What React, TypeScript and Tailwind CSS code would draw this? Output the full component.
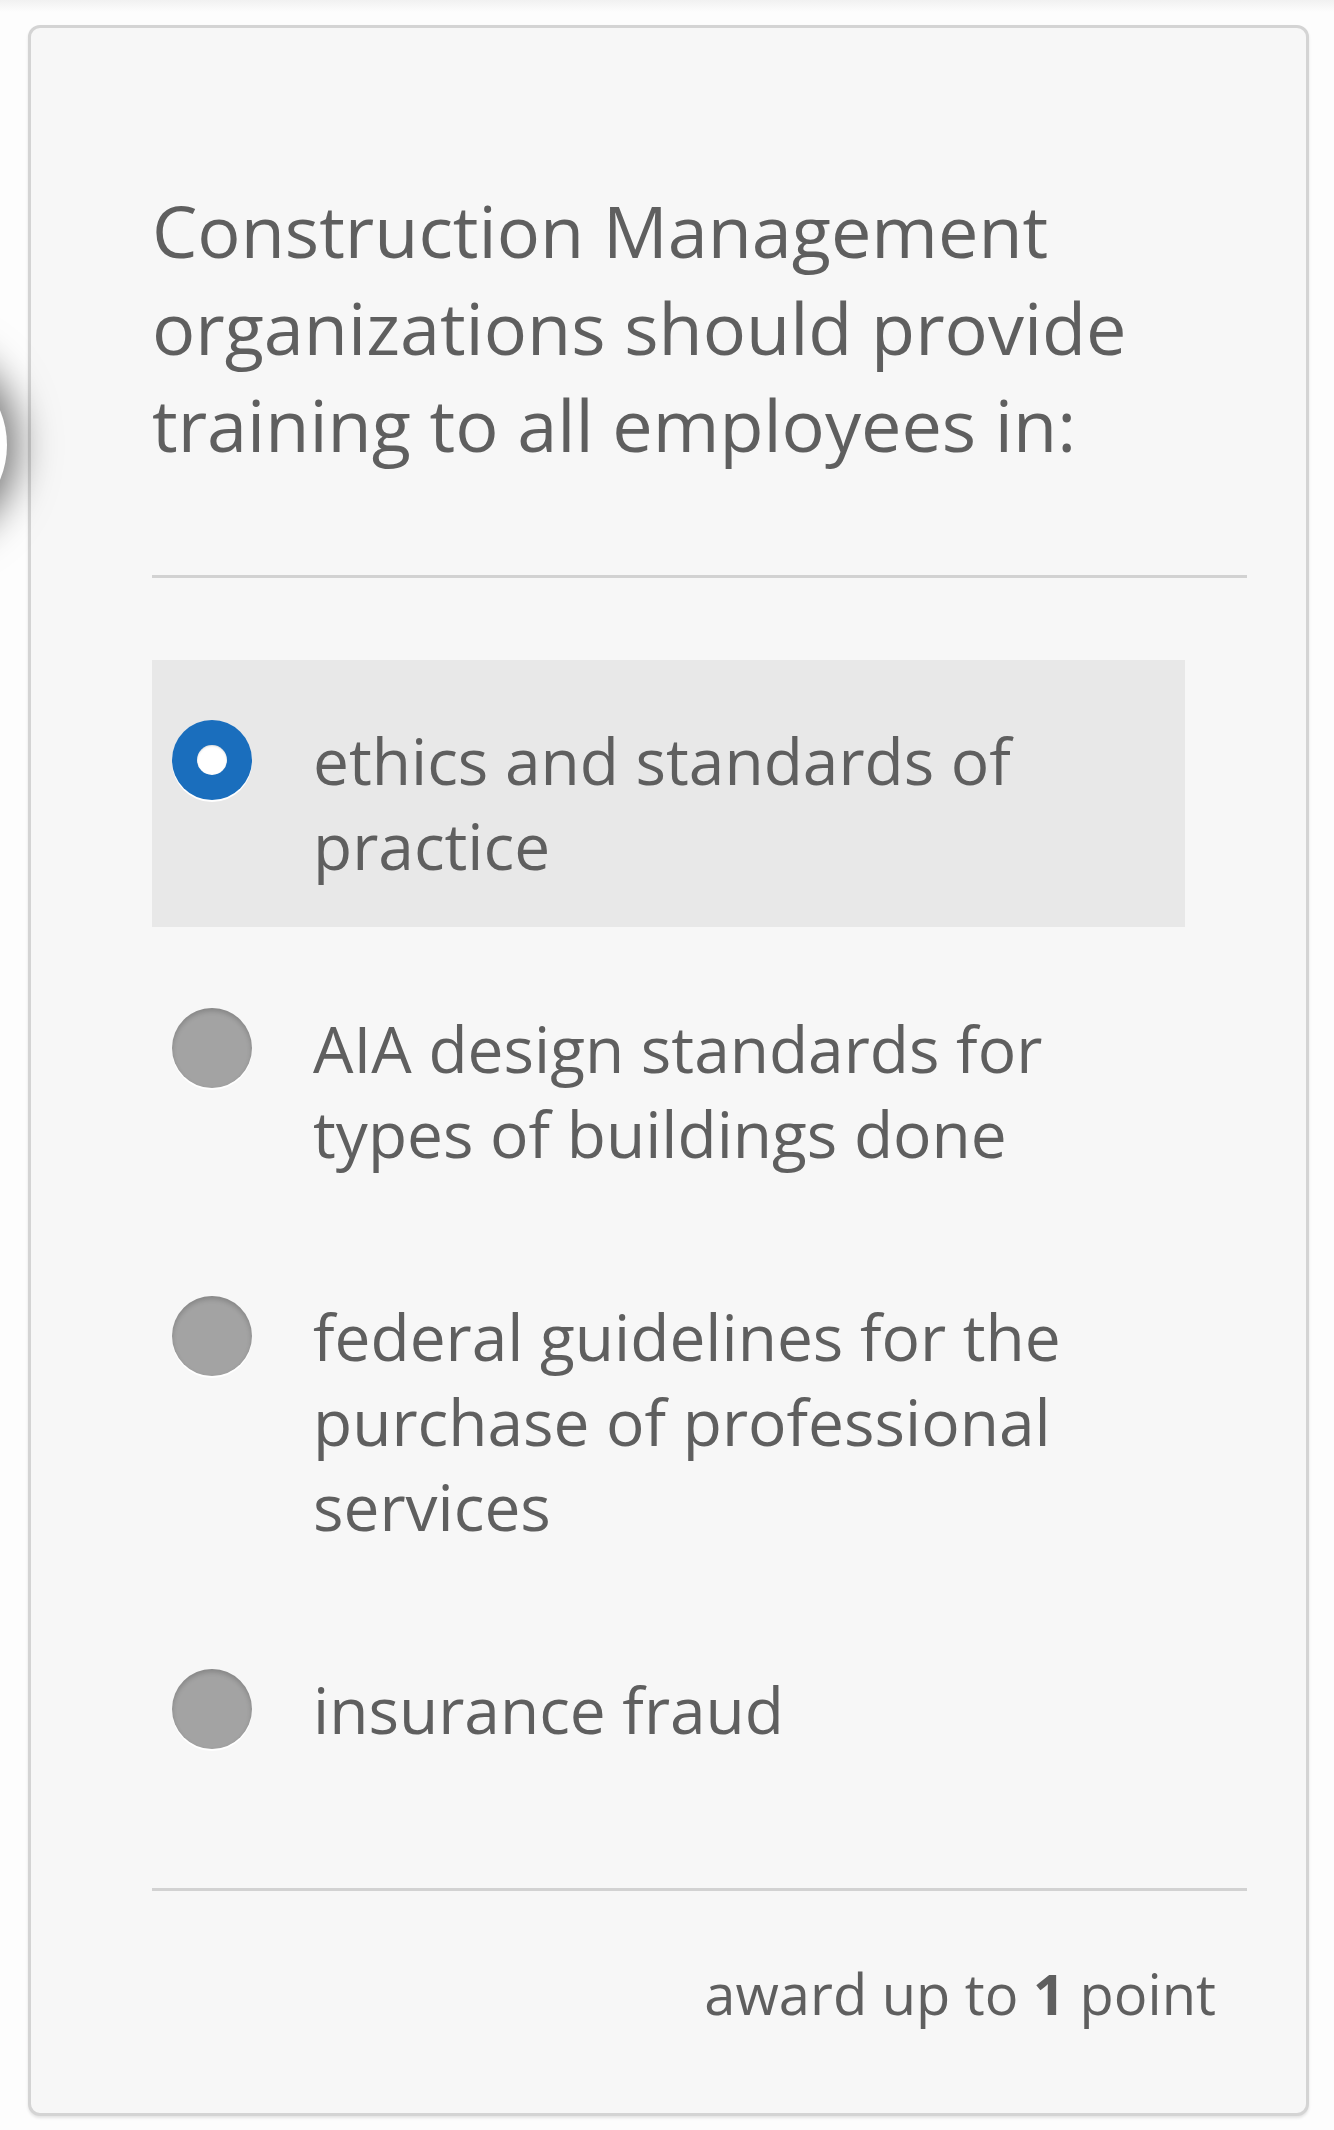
import React from "react"

const options = [
  { text: "ethics and standards of practice", selected: true },
  { text: "AIA design standards for types of buildings done", selected: false },
  { text: "federal guidelines for the purchase of professional services", selected: false },
  { text: "insurance fraud", selected: false },
]

function Radio({ checked }: { checked: boolean }) {
  if (checked) {
    return (
      <div className="mt-[2px] flex h-[80px] w-[80px] shrink-0 items-center justify-center rounded-full bg-[#1a6ebd] shadow-[0_2px_0_#ffffff]">
        <div className="h-[30px] w-[30px] rounded-full bg-white shadow-[inset_0_1px_2px_rgba(0,0,0,0.15)]" />
      </div>
    )
  }
  return (
    <div className="mt-[2px] h-[80px] w-[80px] shrink-0 rounded-full bg-[#a3a3a3] shadow-[inset_0_3px_5px_rgba(0,0,0,0.18),0_2px_0_#ffffff]" />
  )
}

export default function App() {
  return (
    <div
      className="relative min-h-[2130px] overflow-hidden bg-[#fdfdfd] text-[#5f5f5f]"
      style={{ fontFamily: '"Open Sans", "Noto Sans", sans-serif' }}
    >
      <div className="h-[12px] bg-gradient-to-b from-[#f1f1f1] to-[#fdfdfd]" />

      <div className="ml-[28px] mt-[13px] w-[1281px] rounded-[12px] border-[3px] border-[#d4d4d4] bg-[#f7f7f7] pb-[82px] pl-[121px] pr-[59px] pt-[154px] shadow-[0_2px_3px_rgba(0,0,0,0.1)]">
        <h1 className="text-[72px] font-normal leading-[97px]">
          Construction Management organizations should provide training to all employees in:
        </h1>

        <div className="mt-[102px] h-[3px] bg-[#d2d2d2]" />

        <div className="mt-[82px] flex w-[1033px] flex-col gap-[21px]">
          {options.map((o) => (
            <div
              key={o.text}
              className={`flex items-start gap-[61px] pb-[39px] pl-[20px] pr-[30px] pt-[58px] ${o.selected ? "bg-[#e8e8e8]" : ""}`}
            >
              <Radio checked={o.selected} />
              <div className="text-[64px] leading-[85px]">{o.text}</div>
            </div>
          ))}
        </div>

        <div className="mt-[97px] h-[3px] bg-[#d2d2d2]" />

        <div className="mt-[64px] pr-[31px] text-right text-[56px] leading-[76px]">
          award up to <span className="font-bold">1</span> point
        </div>
      </div>

      <div className="absolute left-[-175px] top-[354px] h-[182px] w-[182px] rounded-full bg-white shadow-[0_0_40px_10px_rgba(0,0,0,0.55)]" />
    </div>
  )
}
